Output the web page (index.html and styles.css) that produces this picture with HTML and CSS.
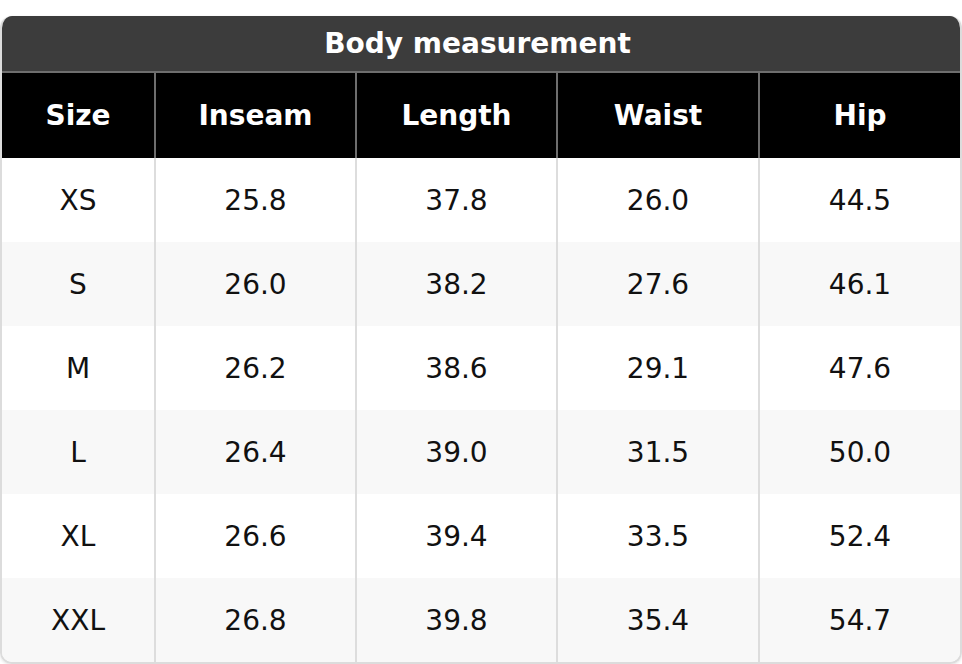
FILE: index.html
```html
<!DOCTYPE html>
<html lang="en">
<head>
<meta charset="utf-8">
<title>Body measurement</title>
<link rel="stylesheet" href="styles.css">
</head>
<body>
<div class="card">
  <div class="title">Body measurement</div>
  <div class="row head">
    <div class="cell">Size</div>
    <div class="cell">Inseam</div>
    <div class="cell">Length</div>
    <div class="cell">Waist</div>
    <div class="cell">Hip</div>
  </div>
  <div class="row">
    <div class="cell">XS</div><div class="cell">25.8</div><div class="cell">37.8</div><div class="cell">26.0</div><div class="cell">44.5</div>
  </div>
  <div class="row alt">
    <div class="cell">S</div><div class="cell">26.0</div><div class="cell">38.2</div><div class="cell">27.6</div><div class="cell">46.1</div>
  </div>
  <div class="row">
    <div class="cell">M</div><div class="cell">26.2</div><div class="cell">38.6</div><div class="cell">29.1</div><div class="cell">47.6</div>
  </div>
  <div class="row alt">
    <div class="cell">L</div><div class="cell">26.4</div><div class="cell">39.0</div><div class="cell">31.5</div><div class="cell">50.0</div>
  </div>
  <div class="row">
    <div class="cell">XL</div><div class="cell">26.6</div><div class="cell">39.4</div><div class="cell">33.5</div><div class="cell">52.4</div>
  </div>
  <div class="row alt">
    <div class="cell">XXL</div><div class="cell">26.8</div><div class="cell">39.8</div><div class="cell">35.4</div><div class="cell">54.7</div>
  </div>
</div>
</body>
</html>
```

FILE: styles.css
```css
* { box-sizing: border-box; }
html, body { margin: 0; padding: 0; background: #ffffff; }
body {
  padding-top: 16px;
  font-family: "DejaVu Sans", Verdana, sans-serif;
  font-size: 28px;
  color: #111111;
}
.card {
  width: 962px;
  border: 2px solid #dcdcdc;
  border-top: none;
  border-radius: 12px;
  overflow: hidden;
  box-shadow: 0 1px 3px rgba(0, 0, 0, 0.12);
}
.title {
  height: 57px;
  margin: 0 -2px;
  padding-right: 7px;
  background: #3c3c3c;
  color: #ffffff;
  font-weight: bold;
  display: flex;
  align-items: center;
  justify-content: center;
  border-bottom: 2px solid #6e6e6e;
}
.row {
  display: grid;
  grid-template-columns: 152px 201px 201px 202px 1fr;
  height: 84px;
  background: #ffffff;
}
.row.alt { background: #f8f8f8; }
.row.head {
  height: 85px;
  background: #000000;
  color: #ffffff;
  font-weight: bold;
}
.cell {
  display: flex;
  align-items: center;
  justify-content: center;
}
.cell + .cell { border-left: 2px solid #dddddd; }
.head .cell + .cell { border-left-color: #6e6e6e; }
```
